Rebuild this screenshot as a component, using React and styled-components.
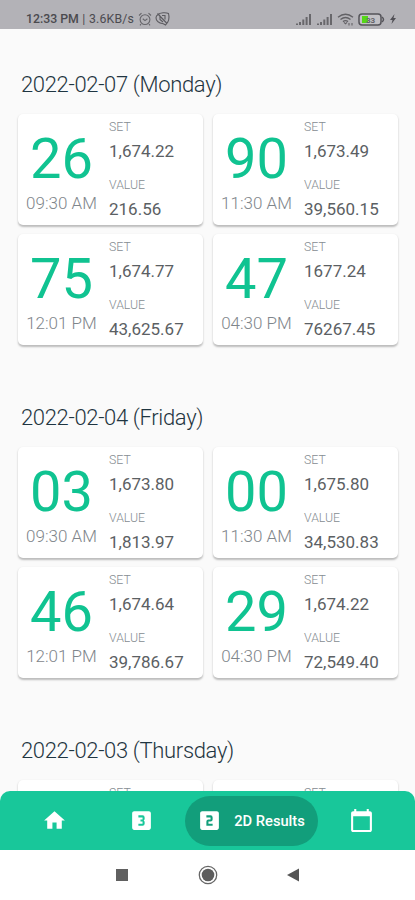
import React from "react";
import styled, { createGlobalStyle } from "styled-components";
import { MdHome, MdLooks3, MdLooksTwo, MdCalendarToday } from "react-icons/md";

const GlobalStyle = createGlobalStyle`
  * { box-sizing: border-box; }
  body { margin: 0; background: #fafafa; font-family: Roboto, sans-serif; overflow: hidden; }
`;

const Screen = styled.div`
  display: flex;
  flex-direction: column;
  width: 415px;
  height: 900px;
  background: #fafafa;
  overflow: hidden;
`;

const StatusBar = styled.header`
  flex: none;
  display: flex;
  justify-content: space-between;
  height: 29px;
  padding: 9px 18px 0 26px;
  background: #b3b2b7;
  color: #4b4a4f;
`;

const StatusGroup = styled.div`
  display: flex;
  align-items: center;
  height: 20px;
  gap: ${(p) => p.$gap}px;
`;

const Clock = styled.span`
  font-size: 12.3px;
  font-weight: ${(p) => p.$weight || 500};
  line-height: 20px;
  white-space: nowrap;
  letter-spacing: ${(p) => p.$spacing || 0}px;
`;

const Feed = styled.main`
  flex: 1;
  min-height: 0;
  overflow: hidden;
  padding: 41px 17px 0 18px;
`;

const Day = styled.section`
  height: 333px;
`;

const DayTitle = styled.h2`
  margin: 0 0 14px 3px;
  height: 30px;
  font-size: 22px;
  font-weight: 300;
  line-height: 30px;
  letter-spacing: -0.34px;
  color: #1f3541;
  white-space: nowrap;
`;

const Cards = styled.div`
  display: grid;
  grid-template-columns: 185px 185px;
  column-gap: 10px;
  row-gap: 9.4px;
`;

const Card = styled.article`
  display: flex;
  height: 111px;
  border-radius: 5px;
  background: #fff;
  box-shadow: 0 1.5px 2px rgba(0, 0, 0, 0.25);
`;

const Draw = styled.div`
  display: flex;
  flex-direction: column;
  align-items: center;
  width: 87px;
  padding-top: 12px;
`;

const Number = styled.strong`
  font-size: 56px;
  font-weight: 400;
  line-height: 66px;
  color: #10c391;
`;

const Time = styled.time`
  margin-top: -0.5px;
  font-size: 17px;
  font-weight: 300;
  line-height: 22px;
  color: #7f868b;
  white-space: nowrap;
`;

const Figures = styled.dl`
  margin: 0;
  padding: 4px 0 0 4px;
`;

const Label = styled.dt`
  font-size: 12.3px;
  font-weight: 300;
  line-height: 18px;
  color: #858c91;
`;

const Figure = styled.dd`
  margin: 2px 0 12px;
  font-size: 17px;
  line-height: 26px;
  height: 26px;
  color: #5b6063;
`;

const TabBar = styled.nav`
  flex: none;
  display: flex;
  align-items: center;
  height: 59px;
  border-radius: 10px 10px 0 0;
  background: #18c79a;
  color: #fff;
  padding-left: 11px;
`;

const Tab = styled.button`
  display: flex;
  align-items: center;
  justify-content: center;
  width: 87px;
  height: 50px;
  padding: 0;
  border: 0;
  background: transparent;
  color: inherit;
  font: 500 14.7px Roboto, sans-serif;
`;

const ActiveTab = styled(Tab)`
  width: 133px;
  gap: 12px;
  padding-right: 1px;
  border-radius: 25px;
  background: #129e7b;
  white-space: nowrap;
`;

const SystemNav = styled.footer`
  flex: none;
  display: flex;
  height: 50px;
  padding: 0 79px;
  justify-content: space-between;
  background: #fff;
`;

const SystemKey = styled.span`
  display: flex;
  align-items: center;
  justify-content: center;
  width: 86px;
`;

const results = [
  ["2022-02-07 (Monday)", [
    ["26", "09:30 AM", "1,674.22", "216.56"],
    ["90", "11:30 AM", "1,673.49", "39,560.15"],
    ["75", "12:01 PM", "1,674.77", "43,625.67"],
    ["47", "04:30 PM", "1677.24", "76267.45"],
  ]],
  ["2022-02-04 (Friday)", [
    ["03", "09:30 AM", "1,673.80", "1,813.97"],
    ["00", "11:30 AM", "1,675.80", "34,530.83"],
    ["46", "12:01 PM", "1,674.64", "39,786.67"],
    ["29", "04:30 PM", "1,674.22", "72,549.40"],
  ]],
  ["2022-02-03 (Thursday)", [null, null]],
];

const AlarmIcon = () => (
  <svg width="14" height="14" viewBox="0 0 14 14" fill="none" stroke="#66656a" strokeWidth="1.1">
    <circle cx="7" cy="7.6" r="4.9" />
    <path d="M1 3.5 3.5 1.2M13 3.5 10.5 1.2M3 12l-1 1.3M11 12l1 1.3M4.8 6.8 7 8.6l2.4-1.8" />
  </svg>
);

const MutedIcon = () => (
  <svg width="15" height="14" viewBox="0 0 15 14" fill="none" stroke="#5c5b60" strokeWidth="1.1">
    <path d="M3 2.5C5 .5 11 .2 13.500 1.500c.8 3.500.6 6.500-.8 8.700l-2.200 2.800-2.200-1.200C4 11 1 8.500 1 5.700 1 4.200 1.800 3.300 3 2.500ZM2.500 1.500l9.500 10M5 4v3.500l3 2.500M7 3.500h3v4" />
  </svg>
);

const SignalIcon = () => (
  <svg width="17" height="13" viewBox="0 0 17 13" fill="#68676b">
    <path d="M1 10.500h2V12H1zM4 9h2v3H4zM7.300 6.500h2V12h-2zM10.600 4h2v8h-2zM14 1h2v11h-2z" />
  </svg>
);

const WifiIcon = () => (
  <svg width="17" height="13" viewBox="0 0 17 13" fill="none" stroke="#626165" strokeWidth="1.4">
    <path d="M1 4.200Q8.500-1.800 16 4.200M3.500 6.500q5-4 10 0M6 8.600q2.500-2 5 0" />
    <path d="m7 9.300 1.500 1.500L10 9.300M12 10v2.500M15 10v2.500" strokeWidth="1.100" />
  </svg>
);

const BatteryIcon = () => (
  <svg width="27" height="13" viewBox="0 0 27 13">
    <rect x="1" y="1" width="22" height="11" rx="3" fill="#c2c1c5" stroke="#55545a" strokeWidth="1.500" />
    <path d="M4 3h6v7H4z" fill="#55d716" />
    <path d="M24 4q3 2.500 0 5" fill="none" stroke="#55545a" strokeWidth="1.500" />
    <text x="8" y="9.500" fontFamily="Roboto" fontSize="8" fontWeight="700" fill="#65646a">33</text>
  </svg>
);

const BoltIcon = () => (
  <svg width="8" height="12" viewBox="0 0 8 12" fill="#504f55">
    <path d="M5.500 1 1 7h2.500L2.500 11 7 5H4.500z" />
  </svg>
);

export default function App() {
  return (
    <Screen>
      <GlobalStyle />
      <StatusBar>
        <StatusGroup $gap={3.5}>
          <Clock>12:33 PM</Clock>
          <Clock $weight={400}>|</Clock>
          <Clock $weight={400} $spacing={0.2}>3.6KB/s</Clock>
          <AlarmIcon />
          <MutedIcon />
        </StatusGroup>
        <StatusGroup $gap={4}>
          <SignalIcon />
          <SignalIcon />
          <WifiIcon />
          <BatteryIcon />
          <BoltIcon />
        </StatusGroup>
      </StatusBar>
      <Feed>
        {results.map(([title, draws]) => (
          <Day key={title}>
            <DayTitle>{title}</DayTitle>
            <Cards>
              {draws.map((draw, i) => (
                <Card key={i}>
                  <Draw>
                    {draw && <Number>{draw[0]}</Number>}
                    {draw && <Time>{draw[1]}</Time>}
                  </Draw>
                  <Figures>
                    <Label>SET</Label>
                    {draw && <Figure>{draw[2]}</Figure>}
                    {draw && <Label>VALUE</Label>}
                    {draw && <Figure>{draw[3]}</Figure>}
                  </Figures>
                </Card>
              ))}
            </Cards>
          </Day>
        ))}
      </Feed>
      <TabBar>
        <Tab aria-label="Home"><MdHome size={25} /></Tab>
        <Tab aria-label="3D Results"><MdLooks3 size={25} /></Tab>
        <ActiveTab><MdLooksTwo size={25} />2D Results</ActiveTab>
        <Tab aria-label="Calendar"><MdCalendarToday size={25} /></Tab>
      </TabBar>
      <SystemNav>
        <SystemKey>
          <svg width="14" height="14"><path d="M1 1h12v12H1z" fill="#606060" /></svg>
        </SystemKey>
        <SystemKey>
          <svg width="20" height="20" viewBox="0 0 20 20">
            <circle cx="10" cy="10" r="8.700" fill="none" stroke="#666" strokeWidth="1.300" />
            <circle cx="10" cy="10" r="6.300" fill="#5c5c5c" />
          </svg>
        </SystemKey>
        <SystemKey>
          <svg width="14" height="14"><path d="M13 .5v13L1 7z" fill="#555" /></svg>
        </SystemKey>
      </SystemNav>
    </Screen>
  );
}
